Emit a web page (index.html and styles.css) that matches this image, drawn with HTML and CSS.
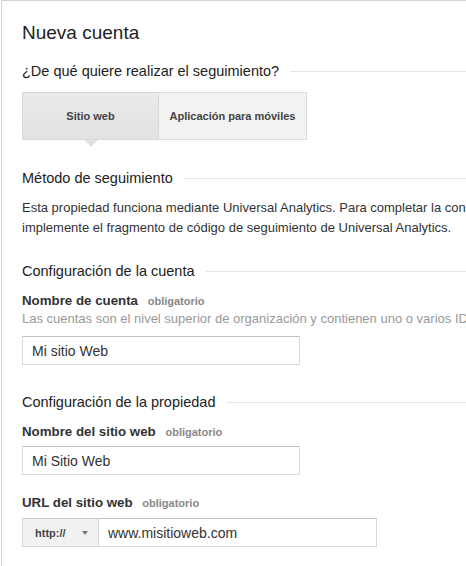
FILE: index.html
```html
<!DOCTYPE html>
<html lang="es">
<head>
<meta charset="utf-8">
<title>Nueva cuenta</title>
<link rel="stylesheet" href="styles.css">
</head>
<body>
<div class="panel">
  <h1 class="title">Nueva cuenta</h1>

  <h2 class="section">¿De qué quiere realizar el seguimiento?</h2>
  <div class="tabs">
    <button class="tab tab-active" type="button">Sitio web</button>
    <button class="tab tab-mobile" type="button">Aplicación para móviles</button>
  </div>

  <h2 class="section section-method">Método de seguimiento</h2>
  <p class="desc">Esta propiedad funciona mediante Universal Analytics. Para completar la configuración, instale y<br>implemente el fragmento de código de seguimiento de Universal Analytics.</p>

  <h2 class="section section-gap">Configuración de la cuenta</h2>
  <div class="field">
    <label class="label">Nombre de cuenta <span class="req">obligatorio</span></label>
    <div class="help">Las cuentas son el nivel superior de organización y contienen uno o varios ID de seguimiento.</div>
    <input class="text-input with-help" type="text" value="Mi sitio Web">
  </div>

  <h2 class="section section-gap2">Configuración de la propiedad</h2>
  <div class="field">
    <label class="label">Nombre del sitio web <span class="req">obligatorio</span></label>
    <input class="text-input" type="text" value="Mi Sitio Web">
  </div>

  <div class="field field-url">
    <label class="label">URL del sitio web <span class="req">obligatorio</span></label>
    <div class="url-group">
      <div class="protocol">
        <span class="protocol-text">http://</span>
        <span class="caret"></span>
      </div>
      <input class="url-input" type="text" value="www.misitioweb.com">
    </div>
  </div>
</div>
</body>
</html>
```
FILE: styles.css
```css
html, body {
  margin: 0;
  padding: 0;
  overflow: hidden;
  background: #fff;
}

body {
  font-family: "Liberation Sans", Arial, sans-serif;
  color: #222;
}

.panel {
  width: 900px;
  margin-left: 1px;
  border-top: 1px solid #d4d4d4;
  border-left: 1px solid #d4d4d4;
  padding: 20px 0 40px 20px;
}

.title {
  margin: 0;
  font-size: 19px;
  line-height: 24px;
  font-weight: normal;
  color: #222;
}

.section {
  display: flex;
  align-items: center;
  margin: 16px 0 0;
  font-size: 14.5px;
  line-height: 20px;
  font-weight: normal;
  color: #222;
  white-space: nowrap;
}

.section::after {
  content: "";
  flex: 1;
  height: 1px;
  margin-left: 11px;
  margin-top: 1px;
  background: #e5e5e5;
}

.section-method { margin-top: 28px; }
.section-gap { margin-top: 23px; }
.section-gap2 { margin-top: 27px; }

/* tab switcher */
.tabs {
  display: flex;
  margin-top: 11px;
}

.tab {
  position: relative;
  height: 48px;
  margin: 0;
  padding: 0;
  font-family: inherit;
  font-size: 11px;
  font-weight: bold;
  color: #444;
  border: 1px solid #dcdcdc;
  background: #f2f2f2;
}

.tab-active {
  width: 137px;
  background: linear-gradient(#eaeaea, #e2e2e2);
  border-color: #d8d8d8;
}

.tab-mobile {
  width: 148px;
  border-left: 0;
}

.tab-active::after {
  content: "";
  position: absolute;
  left: 50%;
  bottom: -8px;
  margin-left: -7px;
  border-left: 7px solid transparent;
  border-right: 7px solid transparent;
  border-top: 7px solid #e2e2e2;
}

.desc {
  margin: 10px 0 0;
  font-size: 13px;
  line-height: 20px;
  color: #333;
  white-space: nowrap;
}

/* form fields */
.field {
  margin-top: 11px;
}

.field-url {
  margin-top: 19px;
}

.label {
  display: block;
  font-size: 13.3px;
  line-height: 18px;
  font-weight: bold;
  color: #333;
}

.req {
  margin-left: 6px;
  font-size: 11px;
  font-weight: bold;
  color: #888;
}

.help {
  font-size: 13px;
  line-height: 18px;
  color: #999;
  white-space: nowrap;
}

.text-input,
.url-input {
  display: block;
  box-sizing: border-box;
  height: 29px;
  margin: 5px 0 0;
  padding: 0 9px;
  font-family: inherit;
  font-size: 14px;
  color: #333;
  border: 1px solid #d9d9d9;
  border-top-color: #c0c0c0;
  border-radius: 0;
  outline: none;
}

.text-input {
  width: 278px;
}

.text-input.with-help {
  margin-top: 8px;
}

.url-group {
  display: flex;
  margin-top: 6px;
}

.protocol {
  box-sizing: border-box;
  display: flex;
  align-items: center;
  width: 77px;
  height: 29px;
  padding-left: 12px;
  background: #f1f1f1;
  border: 1px solid #d9d9d9;
  border-top-color: #c8c8c8;
}

.protocol-text {
  font-size: 11px;
  font-weight: bold;
  color: #444;
}

.caret {
  margin-left: 16px;
  margin-top: 1px;
  border-left: 3px solid transparent;
  border-right: 3px solid transparent;
  border-top: 4px solid #777;
}

.url-input {
  width: 278px;
  margin-top: 0;
  border-left: 0;
}
```
